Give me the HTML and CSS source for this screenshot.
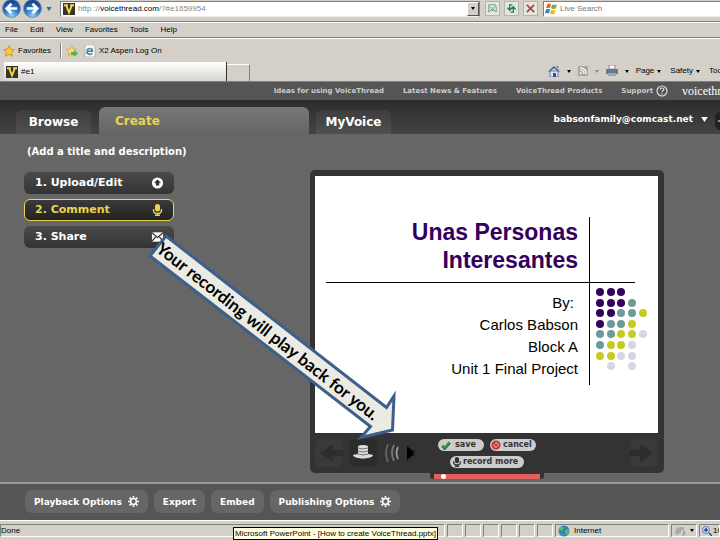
FILE: index.html
```html
<!DOCTYPE html>
<html lang="en">
<head>
<meta charset="utf-8">
<title>VoiceThread</title>
<link rel="stylesheet" href="styles.css">
</head>
<body>
<svg class="defs" aria-hidden="true">
  <defs>
    <radialGradient id="blue" cx=".5" cy=".9" r=".9"><stop offset="0" stop-color="#8fd4ff"/><stop offset=".45" stop-color="#2a78c8"/><stop offset="1" stop-color="#123a85"/></radialGradient>
    <symbol id="vlogo" viewBox="0 0 12 12"><path d="M0 0h12v12H0z" fill="#37342a"/><path d="M1 2.300h4M7 2.300h4M3 2l3 7.500L9 2" fill="none" stroke="#f2d94b" stroke-width="1.900"/></symbol>
    <symbol id="gear" viewBox="0 0 12 12"><circle cx="6" cy="6" r="3.200" fill="none" stroke="#fff" stroke-width="1.700"/><path d="M6 0v2M6 10v2M0 6h2M10 6h2M1.700 1.700l1.500 1.500M8.800 8.800l1.500 1.500M1.700 10.300l1.500-1.500M8.800 3.200l1.500-1.500" stroke="#fff" stroke-width="1.800"/></symbol>
    <symbol id="mic" viewBox="0 0 10 12"><rect x="2.500" y="0" width="5" height="7.500" rx="2.500" fill="currentColor"/><path d="M1 5v1.500C1 10.500 9 10.500 9 6.500V5M5 9v2M2.500 11.300h5" fill="none" stroke="currentColor" stroke-width="1.400"/></symbol>
    <symbol id="back" viewBox="0 0 28 28"><path d="M5 14l13-9v6h10v6H18v6z" fill="#2d2d2d"/></symbol>
    <symbol id="down" viewBox="0 0 4 3"><path d="M0 0h4L2 3z" fill="currentColor"/></symbol>
  </defs>
</svg>

<header class="browser">
  <div class="address-bar">
    <button class="round" aria-label="Back"><svg viewBox="0 0 20 20"><circle cx="10" cy="10" r="9.500" fill="url(#blue)" stroke="#7f93ad"/><path d="M16 10H6M10 5l-5 5 5 5" fill="none" stroke="#fff" stroke-width="2.800"/></svg></button>
    <button class="round" aria-label="Forward"><svg viewBox="0 0 20 20"><circle cx="10" cy="10" r="9.500" fill="url(#blue)" stroke="#7f93ad"/><path d="M4 10h10M10 5l5 5-5 5" fill="none" stroke="#fff" stroke-width="2.800"/></svg></button>
    <button class="recent" aria-label="Recent pages"><svg viewBox="0 0 4 3"><use href="#down"/></svg></button>
    <div class="url">
      <svg class="ico12"><use href="#vlogo"/></svg>
      <div class="url-text" role="textbox" aria-label="Address" contenteditable="true">http ://<b>voicethread.com</b>/?#e1659954</div>
      <button class="drop" aria-label="Show addresses"><svg viewBox="0 0 4 3"><use href="#down"/></svg></button>
    </div>
    <div class="tools">
      <button aria-label="Compatibility view"><svg viewBox="0 0 12 12"><path d="M2 10V2h7l1 2v6L8 8H4zM3 4l3 2 3-2M4 8l2-2 2 2" fill="#e3f3e3" stroke="#5c9b68"/></svg></button>
      <button aria-label="Refresh"><svg viewBox="0 0 12 12"><path d="M7 2H4v5M1.500 5L4 8l2.500-3M5 10h3V5M5.500 7L8 4l2.500 3" fill="none" stroke="#22873a" stroke-width="1.400"/></svg></button>
      <button aria-label="Stop"><svg viewBox="0 0 12 12"><path d="M2 2l8 8M10 2l-8 8" stroke="#b8433c" stroke-width="1.900"/></svg></button>
    </div>
    <label class="search">
      <svg class="ico12" viewBox="0 0 12 12"><path d="M2.500 1Q4 0 6 1L5 5Q3 4.500 1 5.300z" fill="#e2602b"/><path d="M7 1.500Q9 2.500 12 1.300L10.700 5.500Q8 6.500 6 5.300z" fill="#79b23c"/><path d="M1 6.300Q3 5.500 5 6.300L4 10.500Q2 9.500 0 10.300z" fill="#3b7fc8"/><path d="M6 6.500Q8 7.800 10.500 6.700L9.500 11Q7 12 5 10.800z" fill="#f0ba2b"/></svg>
      <input type="text" placeholder="Live Search" aria-label="Live Search">
    </label>
  </div>
  <nav class="menu" aria-label="Menu"><button>File</button><button>Edit</button><button>View</button><button>Favorites</button><button>Tools</button><button>Help</button></nav>
  <div class="favorites">
    <button><svg class="ico12" viewBox="0 0 12 12"><path d="M6 .5l1.700 3.700 4 .4-3 2.700.9 4L6 9.300l-3.600 2 .9-4-3-2.700 4-.4z" fill="#fcc938" stroke="#d8871d" stroke-width=".8"/></svg>Favorites</button>
    <i class="divider"></i>
    <button aria-label="Add to favorites"><svg class="ico12" viewBox="0 0 12 12"><path d="M5.500 .5l1.600 3.400 3.700.4L8 7l.8 3.800-3.300-1.900-3.300 1.900L3 7 .2 4.300l3.700-.4z" fill="#f7d67e" stroke="#d8a144" stroke-width=".8"/><path d="M5 7h3V5l4 3.500L8 12v-2H5z" fill="#4bb845"/></svg></button>
    <a href="#aspen"><svg class="ico12" viewBox="0 0 12 12"><path d="M1 0h8l2 2v10H1z" fill="#fff" stroke="#999" stroke-width=".6"/><path d="M3 6.300h5.500C8.500 2.300 3 2.700 3 6.500c0 3.300 4 3.500 5.300 1.600" fill="none" stroke="#2584c6" stroke-width="1.600"/><path d="M1 9Q4 3 10 3" fill="none" stroke="#efb52f" stroke-width=".7"/></svg>X2 Aspen Log On</a>
  </div>
  <div class="tab-row">
    <button class="page-tab"><svg class="ico12"><use href="#vlogo"/></svg>#e1</button>
    <button class="new-tab" aria-label="New tab"></button>
    <div class="commands">
      <button aria-label="Home"><svg class="ico12" viewBox="0 0 12 12"><path d="M2 6h8v6H2z" fill="#dfe8f8" stroke="#536c9c" stroke-width=".8"/><path d="M0 6.500L6 1l6 5.500H10L6 3 2 6.500zM8.500 1h1.700v3" fill="#42609b"/><path d="M5 8h3v4H5z" fill="#3c5386"/></svg></button>
      <svg class="caret" viewBox="0 0 4 3"><use href="#down"/></svg>
      <button aria-label="Feeds"><svg class="ico10" viewBox="0 0 10 10"><path d="M0 0h10v10H0z" fill="#a6a6a2"/><path d="M2 4q4 0 4 4M2 1.800q6.200 0 6.200 6.200" fill="none" stroke="#fff" stroke-width="1.200"/><circle cx="2.700" cy="7.300" r="1" fill="#fff"/></svg></button>
      <svg class="caret pale" viewBox="0 0 4 3"><use href="#down"/></svg>
      <button aria-label="Print"><svg class="ico12" viewBox="0 0 12 12"><path d="M3 0h6v4H3z" fill="#fff" stroke="#889"/><path d="M0 4h12v5H0z" fill="#6f7880"/><path d="M2 8h8v3H2z" fill="#78b5d0"/></svg></button>
      <svg class="caret" viewBox="0 0 4 3"><use href="#down"/></svg>
      <button class="word">Page <svg class="caret" viewBox="0 0 4 3"><use href="#down"/></svg></button>
      <button class="word">Safety <svg class="caret" viewBox="0 0 4 3"><use href="#down"/></svg></button>
      <button class="clip">Tools</button>
    </div>
  </div>
</header>

<div class="app">
  <nav class="top-links" aria-label="Site">
    <a href="#ideas">Ideas for using VoiceThread</a><a href="#news">Latest News &amp; Features</a><a href="#products">VoiceThread Products</a><a href="#support">Support <svg class="ico12" viewBox="0 0 12 12"><circle cx="6" cy="6" r="5" fill="none" stroke="#ddd" stroke-width="1.200"/><path d="M4.300 4.800c0-2.500 3.500-2.300 3.500-.3C7.800 5.800 6 5.700 6 7.200M6 8.300v1.200" fill="none" stroke="#ddd" stroke-width="1.100"/></svg></a>
    <a class="brand" href="#home">voicethread</a>
  </nav>
  <div class="app-tabs">
    <button class="tab browse">Browse</button>
    <button class="tab create">Create</button>
    <button class="tab voice">MyVoice</button>
    <button class="account">babsonfamily@comcast.net<svg viewBox="0 0 4 3"><use href="#down"/></svg></button>
    <button class="edge" aria-label="Account panel"><svg viewBox="0 0 5 18"><path d="M3 9h2" stroke="#fff"/></svg></button>
  </div>

  <main class="work">
    <section class="side">
      <button class="heading">(Add a title and description)</button>
      <button class="step">1. Upload/Edit<svg viewBox="0 0 14 14"><circle cx="7" cy="7" r="6.500" fill="#fff"/><path d="M7 2.800l4 4H9V10H5V6.800H3z" fill="#333"/></svg></button>
      <button class="step on">2. Comment<svg viewBox="0 0 10 12"><use href="#mic"/></svg></button>
      <button class="step">3. Share<svg viewBox="0 0 14 12"><path d="M1 1h12v10H1z" fill="#fff"/><path d="M1 1.500l6 5 6-5M1 10.500l4-4.500M13 10.500L9 6" fill="none" stroke="#333" stroke-width="1.300"/></svg></button>
    </section>
    <section class="player-area">
      <div class="player">
        <article class="slide">
          <h1>Unas Personas<br>Interesantes</h1>
          <div class="corner"></div>
          <p>By:&nbsp;<br>Carlos Babson<br>Block A<br>Unit 1 Final Project</p>
          <div class="dots">
            <svg viewBox="0 0 64 104" aria-hidden="true">
              <g fill="#33005c"><circle cx="9" cy="8" r="4"/><circle cx="20" cy="8" r="4"/><circle cx="30" cy="8" r="4"/><circle cx="9" cy="19" r="4"/><circle cx="20" cy="19" r="4"/><circle cx="30" cy="19" r="4"/><circle cx="9" cy="29" r="4"/><circle cx="20" cy="29" r="4"/><circle cx="9" cy="40" r="4"/></g>
              <g fill="#6c9b9b"><circle cx="41" cy="19" r="4"/><circle cx="30" cy="29" r="4"/><circle cx="41" cy="29" r="4"/><circle cx="20" cy="40" r="4"/><circle cx="30" cy="40" r="4"/><circle cx="9" cy="50" r="4"/><circle cx="20" cy="50" r="4"/><circle cx="9" cy="61" r="4"/></g>
              <g fill="#c6cb1f"><circle cx="52" cy="29" r="4"/><circle cx="41" cy="40" r="4"/><circle cx="30" cy="50" r="4"/><circle cx="41" cy="50" r="4"/><circle cx="20" cy="61" r="4"/><circle cx="30" cy="61" r="4"/><circle cx="9" cy="72" r="4"/><circle cx="20" cy="72" r="4"/></g>
              <g fill="#d5d5e5"><circle cx="52" cy="50" r="4"/><circle cx="41" cy="61" r="4"/><circle cx="30" cy="72" r="4"/><circle cx="41" cy="72" r="4"/><circle cx="20" cy="82" r="4"/><circle cx="41" cy="82" r="4"/></g>
            </svg>
          </div>
        </article>
        <div class="controls">
          <button class="square" aria-label="Previous"><svg viewBox="0 0 28 28"><use href="#back"/></svg></button>
          <button class="square hat" aria-label="Identity"><svg viewBox="0 0 28 28"><path d="M9 7q5-2 10 0v8q4 0 5 1.500c-2 4-18 4-20 0Q5 15 9 15z" fill="#ddd"/><path d="M9 9q5 2 10 0M9 12q5 2 10 0M9 15q5 2 10 0" fill="none" stroke="#666" stroke-width=".9"/></svg></button>
          <svg class="sound" viewBox="0 0 34 22"><g fill="none"><path d="M5 2q-4 9 0 18" stroke="#666" stroke-width="1.800"/><path d="M11 3q-4 8 0 16" stroke="#777" stroke-width="1.800"/><path d="M15 5q-3 6 0 12" stroke="#999" stroke-width="1.800"/></g><path d="M24 4l6 5v4l-6 5z"/><path d="M31 8v6" stroke="#111"/></svg>
          <div class="actions">
            <button class="pill"><svg viewBox="0 0 12 12"><path d="M1.500 7l3 3 6-7" fill="none" stroke="#207b32" stroke-width="3.500"/><path d="M2 7l2.500 2L10 3" fill="none" stroke="#68bd5d"/></svg>save</button>
            <button class="pill cancel"><svg viewBox="0 0 12 12"><circle cx="6" cy="6" r="4.300" fill="#efb8b4" stroke="#c22f34" stroke-width="2.200"/><path d="M3 3l6 6M8 4L4 8" stroke="#c22f34" stroke-width="1.500"/></svg>cancel</button>
            <button class="pill wide"><svg viewBox="0 0 10 12"><use href="#mic"/></svg>record more</button>
          </div>
          <button class="square next" aria-label="Next"><svg viewBox="0 0 28 28"><use href="#back"/></svg></button>
        </div>
      </div>
      <input class="timeline" type="range" min="0" max="100" value="7" aria-label="Playback position">
    </section>
    <div class="callout">
      <svg viewBox="0 0 250 210">
        <path d="M4 23L20 3l220.500 171.500L248 163l-1.500 34L215 204.500l9.500-11z" fill="#ebebe3" stroke="#3c5f8b" stroke-width="3"/>
        <text x="0" y="0" transform="translate(9 18) rotate(38)">Your recording will play back for you.</text>
      </svg>
    </div>
  </main>

  <footer class="options">
    <button>Playback Options<svg><use href="#gear"/></svg></button>
    <button>Export</button>
    <button>Embed</button>
    <button>Publishing Options<svg><use href="#gear"/></svg></button>
  </footer>
</div>

<div class="status">
  <span class="done">Done</span><i></i><i></i><i></i><i></i><i></i><i></i>
  <span class="zone"><svg class="ico12" viewBox="0 0 12 12"><circle cx="6" cy="6" r="5.500" fill="#2d7fc0"/><path d="M2 2q3-1 4 1L4 6 1 5zM7 5l4-1q1 3-2 6L7 8zM3 8l3 1-1 2z" fill="#5dbb55"/></svg>Internet</span>
  <span class="guard"><svg class="ico12" viewBox="0 0 12 12"><path d="M1 9q0-6 4-7l2 3-2 5zM6 2h3l3 7-3 2-3-2z" fill="#aaa"/><path d="M5 9h3V5" fill="none" stroke="#eee"/></svg><svg class="caret" viewBox="0 0 4 3"><use href="#down"/></svg></span>
  <span class="zoom"><svg class="ico10" viewBox="0 0 10 10"><circle cx="4" cy="4" r="3.500" fill="#cfe1fb" stroke="#5b7cb5"/><path d="M4 2v4M2 4h4M7 7l3 3" stroke="#1f4fa5" stroke-width="1.500"/></svg>100%</span>
  <span class="tip" role="tooltip">Microsoft PowerPoint - [How to create VoiceThread.pptx]</span>
</div>
</body>
</html>
```

FILE: styles.css
```css
* { box-sizing: border-box; }
body {
  margin: 0;
  min-height: 100vh;
  display: flex;
  flex-direction: column;
  overflow: hidden;
  background: #d4d0c8;
  color: #000;
  font: 8px/12px "Liberation Sans", sans-serif;
}
button, input { font: inherit; color: inherit; margin: 0; padding: 0; border: 0; background: none; }
button { white-space: nowrap; }
a { color: inherit; text-decoration: none; }
svg { display: block; flex: none; }
.defs { position: absolute; width: 0; height: 0; }
.ico12 { width: 12px; height: 12px; }
.ico10 { width: 10px; height: 10px; }
.caret { width: 4px; height: 3px; }
.pale { color: #888; }

/* browser window */
.address-bar {
  display: flex;
  align-items: center;
  height: 22px;
  padding-left: 2px;
  padding-bottom: 4px;
  border-bottom: 1px solid #808080;
}
.round svg { width: 19px; height: 19px; }
.round + .round { margin-left: 2px; }
.recent { margin-left: 4px; color: #286a9a; }
.recent svg { width: 6px; height: 4px; }
.url, .search {
  display: flex;
  align-items: center;
  height: 16px;
  background: #fff;
  border: 1px solid #808080;
  border-bottom-color: #eee;
}
.url { flex: 1; margin-left: 8px; padding-left: 2px; gap: 3px; min-width: 0; }
.url-text { flex: 1; color: #858585; white-space: nowrap; }
.url-text b { color: #000; font-weight: 400; }
.drop { width: 12px; height: 14px; background: #d4d0c8; border: 1px solid; border-color: #fff #555 #555 #fff; }
.drop svg { width: 4px; height: 3px; margin: auto; }
.tools { display: flex; gap: 4px; padding: 0 5px; }
.tools button { width: 15px; height: 15px; padding: 1px; border: 1px solid #b5b5ad; background: #e5e6df; }
.tools svg { width: 11px; height: 11px; }
.search { flex: 0 0 177px; gap: 3px; padding-left: 1px; border-right: 0; }
.search input { flex: 1; min-width: 0; outline: 0; }
.search input::placeholder { color: #777; opacity: 1; }
.menu {
  display: flex;
  gap: 12px;
  height: 16px;
  padding-left: 5px;
  border-top: 1px solid #fff;
  border-bottom: 1px solid #808080;
}
.favorites {
  display: flex;
  align-items: center;
  height: 24px;
  padding: 0 3px;
  border-top: 1px solid #fff;
}
.favorites button, .favorites a { display: flex; align-items: center; gap: 3px; }
.favorites a { margin-left: 6px; }
.divider { width: 2px; height: 15px; margin: 0 4px 0 9px; border-left: 1px solid #808080; border-right: 1px solid #fff; }
.tab-row { display: flex; align-items: flex-end; height: 20px; padding-left: 4px; border-bottom: 1px solid #808080; }
.page-tab {
  flex: 0 0 223px;
  display: flex;
  align-items: center;
  gap: 3px;
  height: 19px;
  padding-left: 2px;
  border-right: 1px solid #333;
  background: linear-gradient(#fff, #d8d5ce);
}
.new-tab { width: 23px; height: 17px; border-top: 1px solid #fff; border-right: 1px solid #808080; }
.commands { display: flex; align-items: center; gap: 7px; height: 18px; margin-left: auto; padding-bottom: 2px; }
.word { display: flex; align-items: center; gap: 3px; margin-right: 2px; }
.commands .clip { width: 11px; overflow: hidden; text-align: left; }

/* application */
.app {
  flex: 1;
  display: flex;
  flex-direction: column;
  background: #666;
  color: #fff;
  font-family: "DejaVu Sans", sans-serif;
  font-weight: 700;
}
.top-links {
  display: flex;
  justify-content: flex-end;
  align-items: center;
  gap: 19px;
  height: 18px;
  background: #555;
  color: #ccc;
  font-size: 7px;
  white-space: nowrap;
}
.top-links a { display: flex; align-items: center; gap: 3px; }
.top-links .brand { margin-left: -5px; width: 38px; overflow: hidden; color: #fff; font: 12px/16px "Liberation Serif", serif; }
.app-tabs {
  display: flex;
  align-items: flex-end;
  height: 34px;
  padding-left: 16px;
  background: linear-gradient(#2c2c2c, #444);
}
.tab {
  height: 24px;
  border-radius: 6px 6px 0 0;
  background: linear-gradient(#3e3e3e, #505050);
  font-size: 12px;
}
.browse, .voice { width: 75px; }
.create {
  width: 210px;
  height: 27px;
  margin: 0 7px 0 8px;
  padding: 0 0 0 16px;
  background: linear-gradient(#777, #666);
  color: #ecd34e;
  text-align: left;
}
.account { display: flex; align-items: center; gap: 8px; margin-left: auto; padding-bottom: 9px; font-size: 9px; }
.account svg { width: 7px; height: 5px; }
.edge { width: 5px; height: 18px; margin: 0 0 4px 7px; border-radius: 6px 0 0 6px; background: #222; }
.edge svg { width: 5px; height: 18px; }

.work {
  flex: 1;
  position: relative;
  display: grid;
  grid-template-columns: 150px minmax(0, 1fr);
  column-gap: 136px;
  padding: 12px 56px 3px 24px;
}
.side { display: flex; flex-direction: column; align-items: stretch; gap: 5px; }
.heading { height: 12px; margin-bottom: 9px; padding-left: 3px; text-align: left; font-size: 10px; }
.step {
  display: flex;
  align-items: center;
  justify-content: space-between;
  height: 22px;
  padding: 0 10px 0 11px;
  border-radius: 6px;
  background: linear-gradient(#4a4a4a, #333);
  font-size: 11px;
}
.step svg { width: 13px; height: 12px; }
.step.on { padding: 0 9px 0 10px; border: 1px solid #ecd34e; background: linear-gradient(#3a3a3a, #222); color: #ecd34e; }
.player-area { padding-top: 24px; }
.player { padding: 6px 6px 0 5px; border-radius: 5px; background: #333; }
.slide {
  display: grid;
  grid-template: 106px 151px / minmax(0, 1fr) 69px;
  background:
    linear-gradient(#000, #000) 11px 106px / calc(100% - 34px) 1px no-repeat,
    linear-gradient(#000, #000) calc(100% - 68px) 41px / 1px 168px no-repeat,
    #fff;
  color: #000;
  font-family: "Liberation Sans", sans-serif;
  font-weight: 400;
  text-align: right;
}
.slide h1 { margin: 0; padding: 42px 11px 0 0; color: #33005c; font-size: 23px; line-height: 28px; }
.slide p { margin: 0; padding: 10px 11px 0 0; font-size: 15px; line-height: 22px; }
.dots svg { width: 64px; height: 104px; margin-top: 2px; }
.dots { padding-left: 2px; }
.controls { display: flex; align-items: center; gap: 6px; height: 40px; }
.square { width: 28px; height: 28px; border-radius: 5px; background: #393939; }
.square svg { width: 28px; height: 28px; }
.square.hat { background: #2c2c2c; }
.next { margin-left: auto; transform: rotate(180deg); }
.sound { width: 34px; height: 22px; }
.actions { display: flex; flex-wrap: wrap; justify-content: center; gap: 5px 6px; width: 98px; margin-left: 15px; }
.pill {
  display: flex;
  align-items: center;
  gap: 4px;
  width: 46px;
  height: 12px;
  padding: 0 3px;
  border-radius: 6px;
  background: #ccc;
  color: #333;
  font-size: 8px;
}
.pill svg { width: 10px; height: 10px; }
.pill.cancel { gap: 2px; padding: 0 1px; }
.pill.wide { width: 74px; gap: 1px; padding: 0 2px; }
.timeline {
  appearance: none;
  display: block;
  width: 114px;
  height: 6px;
  margin: 0 auto;
  border: solid #333;
  border-width: 1px 4px 0;
  border-radius: 0 0 3px 3px;
  background: #e4605f;
}
.timeline::-webkit-slider-thumb { appearance: none; width: 5px; height: 5px; border-radius: 50%; background: #fff; }
.callout { position: absolute; left: 146px; top: 99px; width: 250px; pointer-events: none; }
.callout svg { width: 250px; height: 210px; overflow: visible; }
.callout text { font: 700 17px Lato, sans-serif; fill: #000; }

.options {
  display: flex;
  gap: 6px;
  height: 38px;
  padding: 6px 25px;
  border-top: 2px solid #999;
  background: #555;
}
.options button {
  display: flex;
  align-items: center;
  gap: 6px;
  height: 23px;
  padding: 0 9px;
  border-radius: 7px;
  background: #666;
  font-size: 9px;
}
.options svg { width: 11px; height: 11px; }

/* status bar */
.status {
  position: relative;
  display: flex;
  gap: 2px;
  height: 20px;
  padding: 3px 0;
  border-top: 1px solid #fff;
}
.status > :not(.tip) { border: 1px solid; border-color: #808080 #fff #fff #808080; }
.status > i { width: 16px; }
.done { flex: 1; }
.status .zone, .guard, .zoom { display: flex; align-items: center; gap: 4px; padding-left: 2px; }
.zone { width: 114px; }
.guard { width: 26px; }
.status .zoom { width: 21px; gap: 1px; overflow: hidden; }
.tip {
  position: absolute;
  left: 233px;
  bottom: 0;
  padding: 0 1px;
  border: 1px solid #000;
  background: #ffffe1;
  line-height: 11px;
  white-space: nowrap;
}
```
